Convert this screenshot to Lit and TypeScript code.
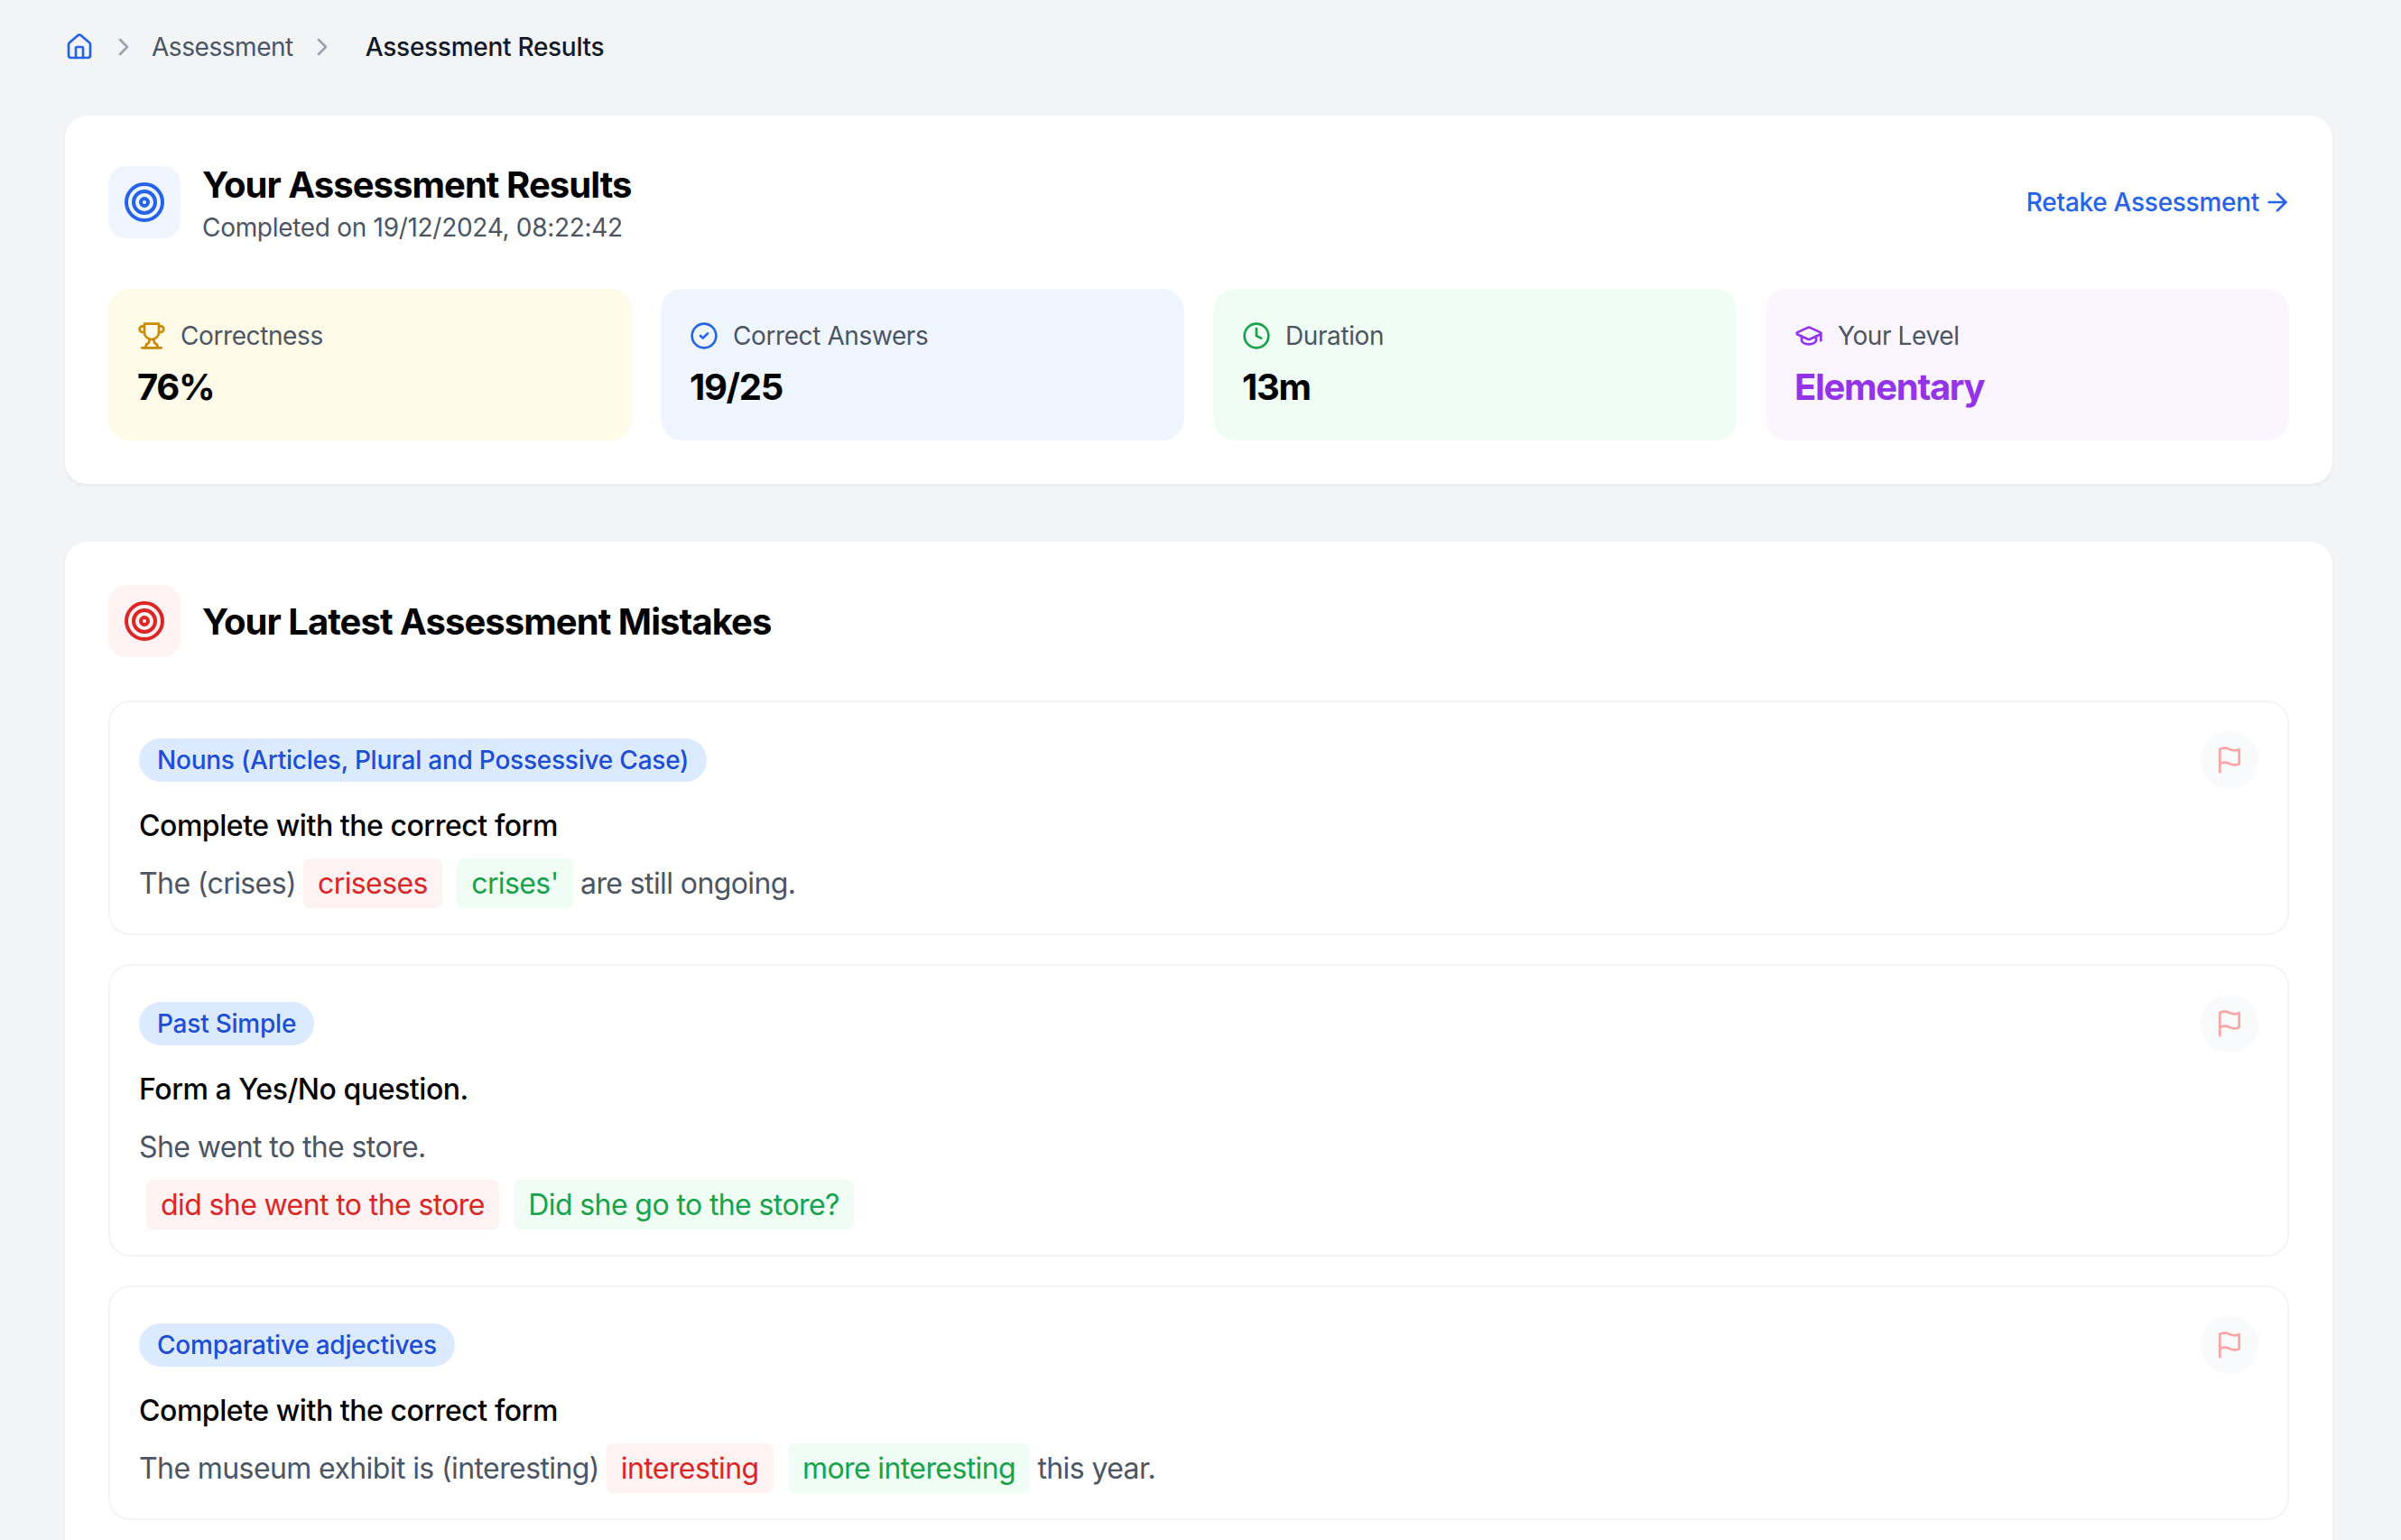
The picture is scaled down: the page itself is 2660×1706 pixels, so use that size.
import { LitElement, html, css, svg } from "lit";
import { customElement } from "lit/decorators.js";

const icon = (body: unknown, cls = "") =>
  html`<svg class="ic ${cls}" viewBox="0 0 24 24" fill="none" stroke="currentColor" stroke-width="2" stroke-linecap="round" stroke-linejoin="round">${body}</svg>`;

const home = svg`<path d="M15 21v-8a1 1 0 0 0-1-1h-4a1 1 0 0 0-1 1v8"/><path d="M3 10a2 2 0 0 1 .709-1.528l7-5.999a2 2 0 0 1 2.582 0l7 5.999A2 2 0 0 1 21 10v9a2 2 0 0 1-2 2H5a2 2 0 0 1-2-2z"/>`;
const chevron = svg`<path d="m9 18 6-6-6-6"/>`;
const target = svg`<circle cx="12" cy="12" r="10"/><circle cx="12" cy="12" r="6"/><circle cx="12" cy="12" r="2"/>`;
const arrow = svg`<path d="M5 12h14"/><path d="m12 5 7 7-7 7"/>`;
const trophy = svg`<path d="M6 9H4.5a2.5 2.5 0 0 1 0-5H6"/><path d="M18 9h1.5a2.5 2.5 0 0 0 0-5H18"/><path d="M4 22h16"/><path d="M10 14.66V17c0 .55-.47.98-.97 1.21C7.85 18.75 7 20.24 7 22"/><path d="M14 14.66V17c0 .55.47.98.97 1.21C16.15 18.75 17 20.24 17 22"/><path d="M18 2H6v7a6 6 0 0 0 12 0V2Z"/>`;
const check = svg`<circle cx="12" cy="12" r="10"/><path d="m9 12 2 2 4-4"/>`;
const clock = svg`<circle cx="12" cy="12" r="10"/><polyline points="12 6 12 12 16 14"/>`;
const cap = svg`<path d="M21.42 10.922a1 1 0 0 0-.019-1.838L12.83 5.18a2 2 0 0 0-1.66 0L2.6 9.08a1 1 0 0 0 0 1.832l8.57 3.908a2 2 0 0 0 1.66 0z"/><path d="M22 10v6"/><path d="M6 12.5V16a6 3 0 0 0 12 0v-3.5"/>`;
const flag = svg`<path d="M4 15s1-1 4-1 5 2 8 2 4-1 4-1V3s-1 1-4 1-5-2-8-2-4 1-4 1z"/><line x1="4" y1="22" x2="4" y2="15"/>`;

const stats = [
  { cls: "yellow", icon: trophy, label: "Correctness", value: "76%" },
  { cls: "blue", icon: check, label: "Correct Answers", value: "19/25" },
  { cls: "green", icon: clock, label: "Duration", value: "13m" },
  { cls: "purple", icon: cap, label: "Your Level", value: "Elementary" },
];

const tagged = (tag: string, title: string, body: unknown) => html`
  <div class="item">
    <div class="item-top">
      <span class="pill">${tag}</span>
      <span class="flag">${icon(flag)}</span>
    </div>
    <div class="q-title">${title}</div>
    ${body}
  </div>
`;

@customElement("app-root")
export class AppRoot extends LitElement {
  static styles = css`
    :host {
      display: block;
      height: 1706px;
      overflow: hidden;
      background: #f3f4f6;
      font-family: Inter, "Liberation Sans", sans-serif;
      color: #000;
    }
    .page {
      padding: 36px 76px 0 72px;
    }
    .ic {
      display: block;
      width: 32px;
      height: 32px;
      flex: none;
    }
    .crumbs {
      display: flex;
      align-items: center;
      height: 32px;
      margin-bottom: 60px;
      font-size: 28px;
      line-height: 40px;
      letter-spacing: -0.45px;
      color: #4b5563;
    }
    .crumbs .home { color: #2563eb; }
    .crumbs .sep { color: #9ca3af; margin: 0 15px 0 17px; }
    .crumbs .sep.two { margin: 0 32px 0 16px; }
    .crumbs .current { color: #111827; font-weight: 500; letter-spacing: -0.28px; }
    .card {
      background: #fff;
      border-radius: 24px;
      padding: 48px;
      box-shadow: 0 2px 4px rgba(0, 0, 0, 0.05);
    }
    .card + .card {
      margin-top: 64px;
      min-height: 1300px;
    }
    .head {
      display: flex;
      align-items: center;
      justify-content: space-between;
      margin-bottom: 48px;
    }
    .head-left {
      display: flex;
      align-items: center;
      gap: 24px;
    }
    .badge {
      width: 80px;
      height: 80px;
      border-radius: 20px;
      display: flex;
      align-items: center;
      justify-content: center;
      background: #eff6ff;
      color: #2563eb;
    }
    .badge.red { background: #fef2f2; color: #dc2626; }
    .badge .ic { width: 48px; height: 48px; }
    h1 {
      margin: 0 0 -1px;
      padding-top: 1px;
      font-size: 40px;
      line-height: 56px;
      font-weight: 700;
      letter-spacing: -0.95px;
    }
    .sub {
      font-size: 28px;
      line-height: 40px;
      letter-spacing: -0.3px;
      color: #4b5563;
    }
    .retake {
      display: flex;
      align-items: center;
      gap: 4px;
      margin-right: -3px;
      font-size: 28px;
      line-height: 40px;
      font-weight: 500;
      letter-spacing: -0.28px;
      color: #2563eb;
    }
    .stats {
      display: grid;
      grid-template-columns: repeat(4, 1fr);
      gap: 32px;
    }
    .stat {
      border-radius: 24px;
      padding: 32px;
    }
    .stat-label {
      display: flex;
      align-items: center;
      gap: 16px;
      font-size: 28px;
      line-height: 40px;
      letter-spacing: -0.4px;
      color: #4b5563;
    }
    .stat-value {
      margin: 8px 0 -1px;
      padding-top: 1px;
      font-size: 40px;
      line-height: 56px;
      font-weight: 700;
      letter-spacing: -1.3px;
    }
    .yellow { background: #fefce8; }
    .yellow .ic { color: #ca8a04; }
    .blue { background: #eff6ff; }
    .blue .ic { color: #2563eb; }
    .green { background: #f0fdf4; }
    .green .ic { color: #16a34a; }
    .purple { background: #faf5ff; }
    .purple .ic, .purple .stat-value { color: #9333ea; }
    .items {
      display: flex;
      flex-direction: column;
      gap: 32px;
    }
    .item {
      border: 2px solid #f3f4f6;
      border-radius: 24px;
      padding: 32px;
    }
    .item-top {
      display: flex;
      align-items: center;
      justify-content: space-between;
      margin-bottom: 16px;
    }
    .pill {
      background: #dbeafe;
      color: #1d4ed8;
      border-radius: 999px;
      padding: 4px 20px;
      font-size: 28px;
      line-height: 40px;
      font-weight: 500;
      letter-spacing: -0.23px;
    }
    .flag {
      width: 64px;
      height: 64px;
      border-radius: 50%;
      background: #f9fafb;
      color: #fca5a5;
      display: flex;
      align-items: center;
      justify-content: center;
    }
    .q-title {
      padding-top: 1px;
      margin-bottom: 15px;
      font-size: 32px;
      line-height: 48px;
      font-weight: 500;
      letter-spacing: -0.45px;
    }
    .sentence {
      padding-top: 1px;
      margin-bottom: -1px;
      font-size: 32px;
      line-height: 48px;
      letter-spacing: -0.6px;
      color: #4b5563;
    }
    .sentence + .sentence { margin-top: 16px; }
    .chip {
      padding: 8px 16px;
      border-radius: 8px;
    }
    .wrong { background: #fef2f2; color: #dc2626; margin: 0 8px; }
    .right { background: #f0fdf4; color: #16a34a; }
  `;

  render() {
    return html`
      <div class="page">
        <nav class="crumbs">
          <span class="home">${icon(home)}</span>
          <span class="sep">${icon(chevron)}</span>
          <span>Assessment</span>
          <span class="sep two">${icon(chevron)}</span>
          <span class="current">Assessment Results</span>
        </nav>

        <section class="card">
          <div class="head">
            <div class="head-left">
              <div class="badge">${icon(target)}</div>
              <div>
                <h1>Your Assessment Results</h1>
                <div class="sub">Completed on 19/12/2024, 08:22:42</div>
              </div>
            </div>
            <div class="retake">Retake Assessment ${icon(arrow)}</div>
          </div>
          <div class="stats">
            ${stats.map(
              (s) => html`
                <div class="stat ${s.cls}">
                  <div class="stat-label">${icon(s.icon)}${s.label}</div>
                  <div class="stat-value">${s.value}</div>
                </div>
              `
            )}
          </div>
        </section>

        <section class="card">
          <div class="head">
            <div class="head-left">
              <div class="badge red">${icon(target)}</div>
              <h1>Your Latest Assessment Mistakes</h1>
            </div>
          </div>
          <div class="items">
            ${tagged(
              "Nouns (Articles, Plural and Possessive Case)",
              "Complete with the correct form",
              html`<div class="sentence">The (crises)<span class="chip wrong">criseses</span> <span class="chip right">crises'</span> are still ongoing.</div>`
            )}
            ${tagged(
              "Past Simple",
              "Form a Yes/No question.",
              html`<div class="sentence">She went to the store.</div>
                <div class="sentence"><span class="chip wrong">did she went to the store</span> <span class="chip right">Did she go to the store?</span></div>`
            )}
            ${tagged(
              "Comparative adjectives",
              "Complete with the correct form",
              html`<div class="sentence">The museum exhibit is (interesting)<span class="chip wrong">interesting</span> <span class="chip right">more interesting</span> this year.</div>`
            )}
          </div>
        </section>
      </div>
    `;
  }
}
